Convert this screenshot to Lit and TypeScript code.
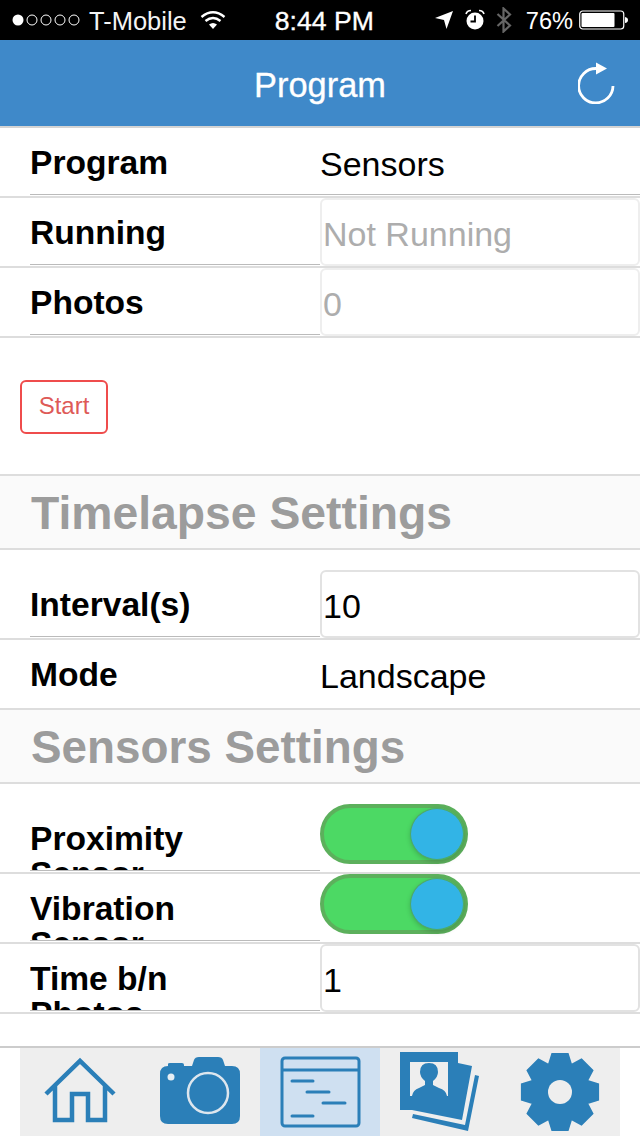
import { LitElement, html, css, svg } from "lit";
import { customElement } from "lit/decorators.js";

function gearPath(): string {
  const cx = 60, cy = 44, ro = 40, rr = 29;
  const d2 = Math.asin(8.5 / ro), d1 = Math.asin(12.5 / rr);
  let d = "";
  for (let i = 0; i < 8; i++) {
    const a = -Math.PI / 2 + (i * Math.PI) / 4;
    const pts = [[rr, a - d1], [ro, a - d2], [ro, a + d2], [rr, a + d1]];
    pts.forEach(([r, t], j) => {
      const x = (cx + r * Math.cos(t)).toFixed(2);
      const y = (cy + r * Math.sin(t)).toFixed(2);
      d += (i === 0 && j === 0 ? "M" : "L") + x + " " + y + " ";
    });
  }
  return d + "Z";
}

const homeIcon = svg`<path d="M26 46 L60 13 L94 46 M35 37 V72 H52 V46 H68 V72 H85 V37" fill="none" stroke="#2b7fb8" stroke-width="4.5" stroke-linejoin="miter"/>`;
const cameraIcon = svg`
  <path d="M20 26 Q20 18 28 18 V16 Q28 15 30 15 H42 Q44 15 44 17 V18 H52 L54 12 Q55 9 59 9 H78 Q82 9 83 12 L85 18 H92 Q100 18 100 26 V68 Q100 76 92 76 H28 Q20 76 20 68 Z" fill="#2b7fb8"/>
  <circle cx="68" cy="45" r="20" fill="#2b7fb8" stroke="#dde6ee" stroke-width="2.5"/>
  <circle cx="31" cy="29" r="3.5" fill="#e6eef4"/>`;
const programIcon = svg`
  <g fill="none" stroke="#2b7fb8" stroke-width="3">
    <rect x="22" y="10" width="77" height="68" rx="3"/>
    <path d="M22 22 H99"/>
    <path d="M32 33 H53 M47 44 H69 M63 55 H85 M32 68 H53" stroke-linecap="round"/>
  </g>`;
const photosIcon = svg`
  <path d="M78 15 L92 18 L82 72 L32 62 V60 H78 Z" fill="#2b7fb8"/>
  <path d="M95 27 L99 28 L88 83 L32 70 L33 66 L85 77 Z" fill="#2b7fb8"/>
  <rect x="20" y="4" width="58" height="58" fill="#2b7fb8"/>
  <rect x="30" y="14" width="38" height="34" fill="#eeeeee"/>
  <path d="M32 48 Q33 42 39 40 L45 37 V33 Q40 29 40 24 Q40 15 49 15 Q58 15 58 24 Q58 29 53 33 V37 L59 40 Q66 42 67 48 Z" fill="#2b7fb8"/>`;
const gearIcon = svg`
  <path d="${gearPath()}" fill="#2b7fb8"/>
  <circle cx="60" cy="44" r="12" fill="#eeeeee"/>`;

@customElement("app-root")
export class AppRoot extends LitElement {
  static styles = css`
    :host {
      display: flex;
      flex-direction: column;
      height: 1136px;
      width: 640px;
      background: #fff;
      font-family: "Liberation Sans", Arial, sans-serif;
      color: #000;
      overflow: hidden;
    }
    .status {
      height: 40px;
      flex: none;
      background: #000;
      color: #fff;
      display: flex;
      align-items: center;
      font-size: 25.5px;
    }
    .status svg { display: block; flex: none; }
    .status span { padding-top: 2px; }
    .dots { margin-left: 12px; }
    .carrier { margin-left: 5px; color: #f4f4f4; }
    .wifi { margin-left: 13px; }
    .clock { margin-left: 49px; font-size: 26.6px; -webkit-text-stroke: 0.35px #fff; }
    .loc { margin-left: 61px; }
    .alarm { margin-left: 12px; }
    .bt { margin-left: 11px; }
    .pct { margin-left: 14px; font-size: 23.6px; }
    .batt { margin-left: 6px; }
    .header {
      height: 86px;
      flex: none;
      background: #3f89c9;
      display: grid;
      grid-template-columns: 1fr auto 1fr;
      align-items: center;
      color: #fff;
      border-bottom: 2px solid #d4d4d4;
    }
    .title {
      font-size: 34.4px;
      line-height: 86px;
      -webkit-text-stroke: 0.3px #fff;
      padding-top: 2px;
    }
    .refresh { justify-self: end; margin: 0 18px 6px 0; display: block; }
    .content { flex: 1; min-height: 0; }
    .row {
      display: grid;
      grid-template-columns: 320px 320px;
      height: 70px;
      box-sizing: border-box;
      border-bottom: 2px solid #dddddd;
      overflow: hidden;
    }
    .row.tall { height: 90px; padding-top: 20px; }
    .label {
      margin-left: 30px;
      height: 67px;
      box-sizing: border-box;
      padding: 17px 100px 0 0;
      font-size: 33.6px;
      font-weight: 700;
      line-height: 35px;
      overflow: hidden;
      border-bottom: 1px solid #bbbbbb;
    }
    .noline .label { border-bottom: none; }
    .value {
      font-size: 34px;
      line-height: 40px;
      padding-top: 16px;
    }
    .row.full { position: relative; }
    .row.full::after {
      content: "";
      position: absolute;
      left: 320px;
      right: 0;
      bottom: 1px;
      height: 1px;
      background: #bbbbbb;
    }
    .field {
      display: block;
      width: 320px;
      height: 68px;
      box-sizing: border-box;
      border: 2px solid #e2e2e2;
      border-radius: 6px;
      padding: 5px 0 0 1px;
      margin: 0;
      background: #fff;
      font: 34px "Liberation Sans", Arial, sans-serif;
      color: #000;
      outline: none;
    }
    .field:disabled {
      color: #adadad;
      border-color: #eeeeee;
      opacity: 1;
      -webkit-text-fill-color: #adadad;
    }
    .action { padding: 42px 0 40px 20px; }
    .start {
      display: block;
      width: 88px;
      height: 54px;
      box-sizing: border-box;
      padding: 0 0 2px;
      background: #fff;
      border: 2px solid #ef4c4c;
      border-radius: 6px;
      color: #de5a57;
      font: 24px "Liberation Sans", Arial, sans-serif;
    }
    .section {
      background: #fafafa;
      border-top: 2px solid #dddddd;
      border-bottom: 2px solid #dddddd;
      box-sizing: border-box;
      height: 76px;
      padding-left: 31px;
      color: #9c9c9c;
      font-size: 46.3px;
      font-weight: 700;
      line-height: 75px;
    }
    .section.joined { border-top: none; height: 74px; font-size: 45.8px; }
    .toggle {
      width: 148px;
      height: 60px;
      box-sizing: border-box;
      border: 4px solid #5cb05c;
      border-radius: 30px;
      background: #4cd964;
      display: flex;
      justify-content: flex-end;
    }
    .knob {
      width: 54px;
      height: 52px;
      box-sizing: border-box;
      border-radius: 50%;
      background: #32b4e6;
      border: 1px solid #4fa86a;
      box-shadow: 0 2px 5px rgba(0, 0, 0, 0.18);
    }
    .tabwrap {
      flex: none;
      height: 90px;
      box-sizing: border-box;
      border-top: 2px solid #cccccc;
      padding: 0 20px;
    }
    .tabs {
      height: 88px;
      background: #eeeeee;
      display: grid;
      grid-template-columns: repeat(5, 120px);
    }
    .tab { height: 88px; display: block; overflow: hidden; }
    .tab.active { background: #cfe0f1; }
    .tab svg { display: block; filter: blur(0.6px); }
  `;

  private tab(icon: unknown, active = false) {
    return html`<div class="tab ${active ? "active" : ""}">
      <svg width="120" height="88" viewBox="0 0 120 88">${icon}</svg>
    </div>`;
  }

  render() {
    return html`
      <div class="status">
        <svg class="dots" width="72" height="40" viewBox="0 0 72 40">
          <circle cx="6" cy="20" r="5.5" fill="#fff"/>
          <g fill="none" stroke="#fff" stroke-width="1">
            <circle cx="20" cy="20" r="5"/><circle cx="34" cy="20" r="5"/>
            <circle cx="48" cy="20" r="5"/><circle cx="62" cy="20" r="5"/>
          </g>
        </svg>
        <span class="carrier">T-Mobile</span>
        <svg class="wifi" width="26" height="20" viewBox="0 0 26 20">
          <g fill="none" stroke="#fff" stroke-width="2.4">
            <path d="M1.5 7 Q13 -2.5 24.5 7"/>
            <path d="M5.5 11 Q13 5 20.5 11"/>
          </g>
          <path d="M9 14.5 Q13 11.5 17 14.5 L13 19 Z" fill="#fff"/>
        </svg>
        <span class="clock">8:44 PM</span>
        <svg class="loc" width="18" height="20" viewBox="0 0 18 20">
          <path d="M0 8 L18 1 L11.5 19 L9 10 Z" fill="#fff"/>
        </svg>
        <svg class="alarm" width="20" height="22" viewBox="0 0 20 22">
          <circle cx="10" cy="12" r="8.5" fill="#fff"/>
          <path d="M10 6.5 V12.5 H5.5" fill="none" stroke="#000" stroke-width="1.8"/>
          <path d="M1 5 Q2 1.5 6 1.5 M19 5 Q18 1.5 14 1.5" fill="none" stroke="#fff" stroke-width="1.6"/>
        </svg>
        <svg class="bt" width="16" height="26" viewBox="0 0 16 26">
          <path d="M1.5 7 L14 18.5 L7.5 24.5 V1.5 L14 7.5 L1.5 19" fill="none" stroke="#666" stroke-width="2.2"/>
        </svg>
        <span class="pct">76%</span>
        <svg class="batt" width="50" height="20" viewBox="0 0 50 20">
          <rect x="0.75" y="1" width="44" height="18" rx="3" fill="none" stroke="#fff" stroke-width="1.2"/>
          <rect x="2.5" y="3" width="33" height="14" rx="1" fill="#fff"/>
          <path d="M46 7 Q49 7.5 49 10 Q49 12.5 46 13 Z" fill="#fff"/>
        </svg>
      </div>
      <div class="header">
        <span></span>
        <div class="title">Program</div>
        <svg class="refresh" width="44" height="46" viewBox="0 0 44 46">
          <path d="M18 10.5 A17.2 17.2 0 1 0 35 28" fill="none" stroke="#fff" stroke-width="2.8"/>
          <path d="M18 4.5 L29 10.5 L18 16.5 Z" fill="#fff"/>
        </svg>
      </div>
      <div class="content">
        <div class="row full"><div class="label">Program</div><div class="value">Sensors</div></div>
        <div class="row"><div class="label">Running</div><input class="field" disabled .value=${"Not Running"} /></div>
        <div class="row"><div class="label">Photos</div><input class="field" disabled .value=${"0"} /></div>
        <div class="action"><button class="start">Start</button></div>
        <div class="section">Timelapse Settings</div>
        <div class="row tall"><div class="label">Interval(s)</div><input class="field" .value=${"10"} /></div>
        <div class="row noline"><div class="label">Mode</div><div class="value">Landscape</div></div>
        <div class="section joined">Sensors Settings</div>
        <div class="row tall"><div class="label">Proximity Sensor</div><div class="toggle"><div class="knob"></div></div></div>
        <div class="row"><div class="label">Vibration Sensor</div><div class="toggle"><div class="knob"></div></div></div>
        <div class="row"><div class="label">Time b/n Photos</div><input class="field" .value=${"1"} /></div>
      </div>
      <div class="tabwrap">
        <div class="tabs">
          ${this.tab(homeIcon)}
          ${this.tab(cameraIcon)}
          ${this.tab(programIcon, true)}
          ${this.tab(photosIcon)}
          ${this.tab(gearIcon)}
        </div>
      </div>
    `;
  }
}
